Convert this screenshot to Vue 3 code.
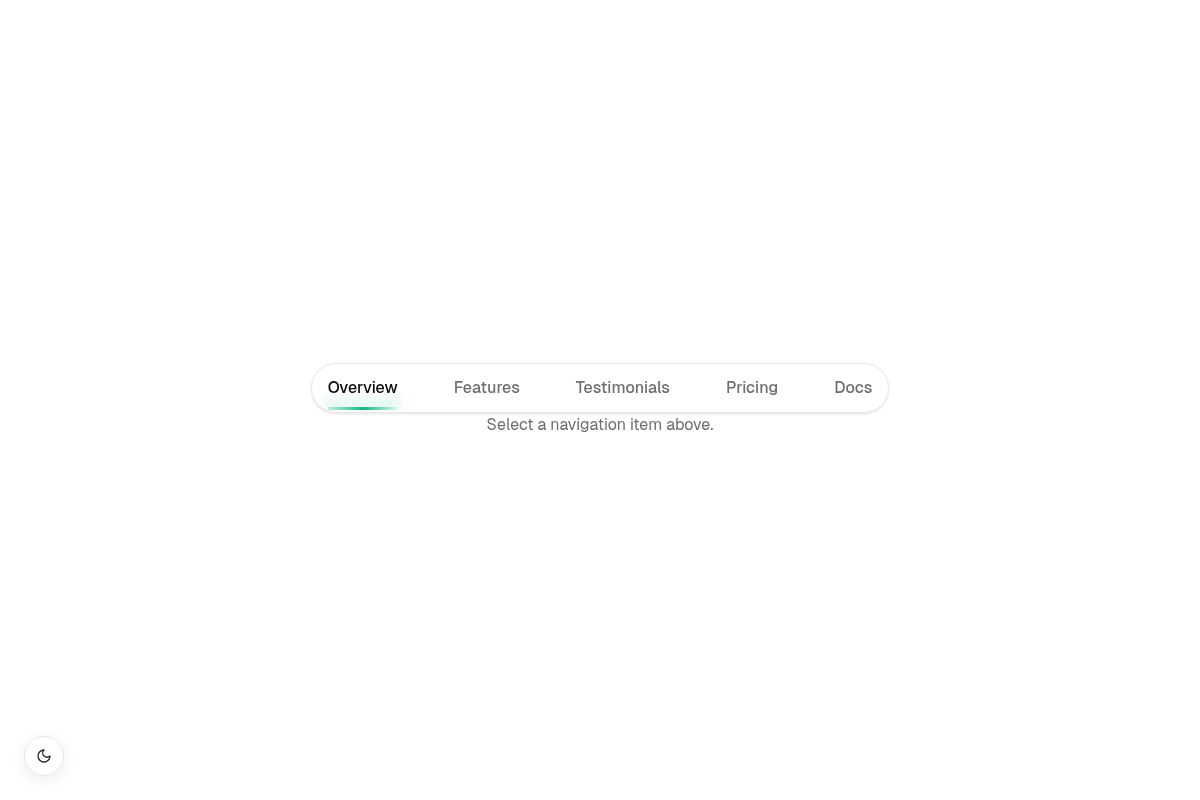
<script setup>
const items = ['Overview', 'Features', 'Testimonials', 'Pricing', 'Docs']
</script>

<template>
  <main class="page">
    <nav class="nav">
      <a v-for="(item, i) in items" :key="item" class="link" :class="{ active: i === 0 }">
        {{ item }}
        <span v-if="i === 0" class="glow"></span>
        <span v-if="i === 0" class="bar"></span>
      </a>
    </nav>
    <p class="caption">Select a navigation item above.</p>
    <button class="theme" aria-label="Toggle theme">
      <svg width="16" height="16" viewBox="0 0 24 24" fill="none" stroke="currentColor" stroke-width="2" stroke-linecap="round" stroke-linejoin="round">
        <path d="M12 3a6 6 0 0 0 9 9 9 9 0 1 1-9-9Z" />
      </svg>
    </button>
  </main>
</template>

<style>
html, body { margin: 0; background: #fff; }
</style>

<style scoped>
.page {
  height: 800px;
  display: flex;
  flex-direction: column;
  align-items: center;
  justify-content: center;
  font-family: Geist, Inter, "Liberation Sans", sans-serif;
  position: relative;
  overflow: hidden;
  will-change: opacity;
}
.nav {
  display: flex;
  gap: 56px;
  padding: 0 16px;
  height: 48px;
  align-items: center;
  background: #fff;
  border: 1px solid #e8e8e8;
  border-radius: 25px;
  box-shadow: 0 1px 3px rgba(0, 0, 0, 0.12);
  position: relative;
  overflow: hidden;
}
.link {
  position: relative;
  font-size: 16px;
  font-weight: 500;
  line-height: 24px;
  color: #6f6f6f;
  white-space: nowrap;
}
.link.active { color: #0a0a0a; }
.bar {
  position: absolute;
  left: 0;
  right: 0;
  top: 31px;
  height: 3px;
  background: linear-gradient(90deg, rgba(16, 185, 129, 0.2), #10b981 50%, rgba(16, 185, 129, 0.12) 97%);
}
.glow {
  position: absolute;
  left: -4px;
  right: -4px;
  top: 21px;
  height: 13px;
  background: rgba(16, 185, 129, 0.1);
  filter: blur(4px);
}
.caption {
  margin: 0;
  font-size: 16px;
  line-height: 24px;
  color: #6f6f6f;
}
.theme {
  position: absolute;
  left: 24px;
  bottom: 24px;
  width: 40px;
  height: 40px;
  padding: 0;
  display: flex;
  align-items: center;
  justify-content: center;
  background: #fff;
  color: #27272a;
  border: 1px solid #e6e6e6;
  border-radius: 50%;
  box-shadow: 0 4px 16px rgba(0, 0, 0, 0.08);
}
</style>
